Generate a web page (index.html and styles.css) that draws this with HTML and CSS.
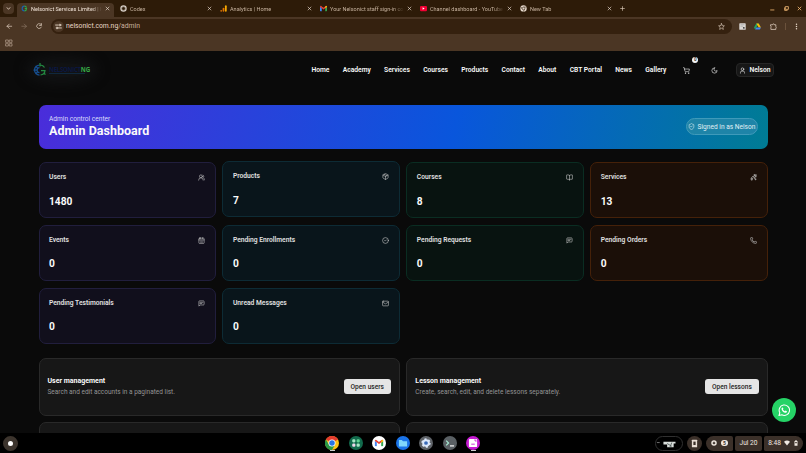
FILE: index.html
```html
<!DOCTYPE html>
<html lang="en">
<head>
  <meta charset="UTF-8" />
  <meta name="viewport" content="width=device-width, initial-scale=1.0"/>
  <title>Nelsonict Services Limited | ICT</title>
  <link rel="stylesheet" href="styles.css">
</head>
<body>

<!-- icon set -->
<svg class="sprite">
  <symbol id="users" viewBox="0 0 24 24"><path d="M16 21v-2a4 4 0 0 0-4-4H6a4 4 0 0 0-4 4v2M22 21v-2a4 4 0 0 0-3-3.87M16 3.13a4 4 0 0 1 0 7.75"/><circle cx="9" cy="7" r="4"/></symbol>
  <symbol id="users-round" viewBox="0 0 24 24"><path d="M18 21a8 8 0 0 0-16 0M22 20c0-3.37-2-6.5-4-8a5 5 0 0 0-.45-8.3"/><circle cx="10" cy="8" r="5"/></symbol>
  <symbol id="box" viewBox="0 0 24 24"><path d="M21 8a2 2 0 0 0-1-1.73l-7-4a2 2 0 0 0-2 0l-7 4A2 2 0 0 0 3 8v8a2 2 0 0 0 1 1.73l7 4a2 2 0 0 0 2 0l7-4A2 2 0 0 0 21 16zM3.3 7l8.7 5 8.7-5M12 22V12M7.5 4.3l9 5.1"/></symbol>
  <symbol id="book" viewBox="0 0 24 24"><path d="M12 7v14M3 18a1 1 0 0 1-1-1V4a1 1 0 0 1 1-1h5a4 4 0 0 1 4 4 4 4 0 0 1 4-4h5a1 1 0 0 1 1 1v13a1 1 0 0 1-1 1h-6a3 3 0 0 0-3 3 3 3 0 0 0-3-3z"/></symbol>
  <symbol id="sparkles" viewBox="0 0 24 24"><path d="M15 2l1.500 5.500L22 9l-5.500 1.500L15 16l-1.500-5.500L8 9l5.500-1.500zM6 13l1 3 3 1-3 1-1 4-1-4-3-1 3-1zM20 2v4M22 4h-4M19 16v4M21 18h-4"/></symbol>
  <symbol id="calendar" viewBox="0 0 24 24"><rect x="3" y="4" width="18" height="18" rx="2"/><path d="M8 2v4M16 2v4M3 10h18M8 14h.01M12 14h.01M16 14h.01M8 18h.01M12 18h.01M16 18h.01"/></symbol>
  <symbol id="check" viewBox="0 0 24 24"><circle cx="12" cy="12" r="10"/><path d="M9 12l2 2 4-4"/></symbol>
  <symbol id="message" viewBox="0 0 24 24"><path d="M21 15a2 2 0 0 1-2 2H7l-4 4V5a2 2 0 0 1 2-2h14a2 2 0 0 1 2 2zM13 12H7M17 8H7"/></symbol>
  <symbol id="phone" viewBox="0 0 24 24"><path d="M13.800 16.600a1 1 0 0 0 1.200-.3l.4-.5A2 2 0 0 1 17 15h3a2 2 0 0 1 2 2v3a2 2 0 0 1-2 2A18 18 0 0 1 2 4a2 2 0 0 1 2-2h3a2 2 0 0 1 2 2v3a2 2 0 0 1-.8 1.600l-.5.35a1 1 0 0 0-.3 1.230 14 14 0 0 0 6.400 6.400"/></symbol>
  <symbol id="mail" viewBox="0 0 24 24"><rect x="2" y="4" width="20" height="16" rx="2"/><path d="M22 7l-9 5.700a2 2 0 0 1-2 0L2 7"/></symbol>
  <symbol id="shield" viewBox="0 0 24 24"><path d="M20 13c0 5-3.500 7.500-7.700 9a1 1 0 0 1-.6 0C7.500 20.500 4 18 4 13V6a1 1 0 0 1 1-1c2 0 4.500-1.200 6.200-2.700a1.200 1.200 0 0 1 1.600 0C14.500 3.800 17 5 19 5a1 1 0 0 1 1 1zM9 12l2 2 4-4"/></symbol>
  <symbol id="cart" viewBox="0 0 24 24"><circle cx="8" cy="21" r="1"/><circle cx="19" cy="21" r="1"/><path d="M2 2h2l2.700 12.400a2 2 0 0 0 2 1.600h9.700a2 2 0 0 0 2-1.600L22 7H5.100"/></symbol>
  <symbol id="moon" viewBox="0 0 24 24"><path d="M12 3a6 6 0 0 0 9 9 9 9 0 1 1-9-9z"/></symbol>
  <symbol id="user" viewBox="0 0 24 24"><path d="M19 21v-2a5 5 0 0 0-5-5h-4a5 5 0 0 0-5 5v2"/><circle cx="12" cy="7.500" r="4.500"/></symbol>
  <symbol id="close" viewBox="0 0 24 24"><path d="M5 5l14 14M19 5L5 19"/></symbol>
  <symbol id="gmail" viewBox="0 0 24 18"><path fill="#4285f4" d="M0 3v13a2 2 0 0 0 2 2h4V7z"/><path fill="#34a853" d="M24 3v13a2 2 0 0 1-2 2h-4V7z"/><path fill="#ea4335" d="M0 3c0-3 3-4 5-2l7 5 7-5c2-2 5-1 5 2l-12 9z"/><path fill="#fbbc04" d="M18 2.500L19.500 1C22-1 24 1 24 3v1l-6 4.500z"/></symbol>
  <symbol id="chrome" viewBox="0 0 24 24"><circle cx="12" cy="12" r="12" fill="#fbc116"/><path fill="#e33b2e" d="M12 12L1.600 6A12 12 0 0 1 22.400 6z"/><path fill="#279847" d="M1.600 6A12 12 0 0 0 12 24l5.200-9H6.800z"/><circle cx="12" cy="12" r="6" fill="#fff"/><circle cx="12" cy="12" r="4.700" fill="#2874e6"/></symbol>
</svg>

<div class="tabs">
  <span class="tab-search"><svg class="line" viewBox="0 0 24 24"><path d="M5 8l7 8 7-8"/></svg></span>
  <div class="tab active">
    <svg class="favicon" viewBox="0 0 24 24"><path d="M12 4a8 8 0 1 0 0 16" fill="none" stroke="#1c5fae" stroke-width="4"/><path d="M12 4a8 8 0 0 1 7 5M12 20a8 8 0 0 0 7-8h-6" fill="none" stroke="#2fa84a" stroke-width="4"/></svg>
    <span>Nelsonict Services Limited | ICT</span>
    <svg class="line x"><use href="#close"/></svg>
  </div>
  <div class="tab">
    <svg class="favicon" viewBox="0 0 24 24"><circle cx="12" cy="12" r="9" fill="none" stroke="#d8d0c8" stroke-width="4"/><path d="M6 9l6-3 6 3v6l-6 3-6-3z" fill="none" stroke="#d8d0c8" stroke-width="1.500"/></svg>
    <span>Codex</span>
    <svg class="line x"><use href="#close"/></svg>
  </div>
  <div class="tab">
    <svg class="favicon" viewBox="0 0 24 24"><rect x="17" y="1" width="6" height="22" rx="3" fill="#f9ab00"/><rect x="9" y="9" width="6" height="14" rx="3" fill="#e37400"/><circle cx="4" cy="20" r="3" fill="#e37400"/></svg>
    <span>Analytics | Home</span>
    <svg class="line x"><use href="#close"/></svg>
  </div>
  <div class="tab">
    <svg class="favicon"><use href="#gmail"/></svg>
    <span>Your Nelsonict staff sign-in code</span>
    <svg class="line x"><use href="#close"/></svg>
  </div>
  <div class="tab">
    <svg class="favicon" viewBox="0 0 24 24"><rect y="3" width="24" height="18" rx="4" fill="#f00033"/><path d="M9 8l7 4-7 4z" fill="#fff"/></svg>
    <span>Channel dashboard - YouTube</span>
    <svg class="line x"><use href="#close"/></svg>
  </div>
  <div class="tab">
    <svg class="favicon" viewBox="0 0 24 24"><circle cx="12" cy="12" r="11" fill="#e5d8cb"/><path d="M12 7h10M8 14L3 6M16 14l-5 9" stroke="#2d1b08" stroke-width="2"/><circle cx="12" cy="12" r="4.500" fill="#e5d8cb" stroke="#2d1b08" stroke-width="2"/></svg>
    <span>New Tab</span>
    <svg class="line x"><use href="#close"/></svg>
  </div>
  <svg class="line plus" viewBox="0 0 24 24"><path d="M12 3v18M3 12h18"/></svg>
  <div class="window-buttons">
    <svg class="line" viewBox="0 0 24 24"><path d="M3 19h16"/></svg>
    <svg class="line" viewBox="0 0 24 24"><path d="M8 3h13v13H8zM3 9v12h12"/></svg>
    <svg class="line"><use href="#close"/></svg>
  </div>
</div>

<div class="toolbar">
  <svg class="line" viewBox="0 0 24 24"><path d="M21 12H4M12 4l-8 8 8 8"/></svg>
  <svg class="line dim" viewBox="0 0 24 24"><path d="M3 12h17M12 4l8 8-8 8"/></svg>
  <svg class="line" viewBox="0 0 24 24"><path d="M20 15a9 9 0 1 1-1-9M20 2v7h-7"/></svg>
  <div class="address">
    <span class="site"><svg class="line" viewBox="0 0 24 24"><path d="M2 7h9M13 17h9"/><circle cx="17" cy="7" r="3"/><circle cx="7" cy="17" r="3"/></svg></span>
    <span class="url">nelsonict.com.ng<i>/admin</i></span>
    <svg class="line" viewBox="0 0 24 24"><path d="M12 2l3 7 7 .6-5.300 4.800L18.300 22 12 18l-6.300 4 1.600-7.600L2 9.600 9 9z"/></svg>
  </div>
  <svg class="ext" viewBox="0 0 24 24"><rect x="1" y="1" width="22" height="22" rx="2" fill="#ded9d6"/><path d="M5 6h14M5 11h8" stroke="#999" stroke-width="2"/><path d="M13 13l8 3-5 5z" fill="#333"/></svg>
  <svg class="ext" viewBox="0 0 24 24"><path d="M8 2h8l-8 13-4 7-4-7z" fill="#1fa463"/><path d="M8 2h8l8 13h-8z" fill="#fbbc04"/><path d="M8 15h16l-4 7H4z" fill="#4285f4"/></svg>
  <svg class="line ext" viewBox="0 0 24 24"><path d="M3 6h6a3 3 0 0 1 6 0h5v6a3 3 0 0 1 0 5v5H3v-6a3 3 0 0 0 0-5z"/></svg>
  <span class="divider"></span>
  <svg class="ext dots" viewBox="0 0 24 24"><circle cx="12" cy="4" r="2.500"/><circle cx="12" cy="12" r="2.500"/><circle cx="12" cy="20" r="2.500"/></svg>
</div>
<div class="bookmarks">
  <svg class="line" viewBox="0 0 24 24"><path d="M3 3h7v7H3zM14 3h7v7h-7zM3 14h7v7H3zM14 14h7v7h-7z"/></svg>
</div>

<div class="page">
  <header>
    <div class="logo">
      <svg viewBox="0 0 28 28"><g fill="none" stroke-width="2.500"><path d="M13 4a10 10 0 0 0 0 20M13 9a5 5 0 0 0 0 10M1 14h7M5 6l4 4M5 22l4-4" stroke="#164f91"/><path d="M15 4a10 10 0 0 1 8 5M15 24a10 10 0 0 0 9-9h-8M14 0v7M21 20l4 3" stroke="#238b42"/></g></svg>
      <div><b>NELSONICT<em>NG</em></b><small></small></div>
    </div>
    <nav>
      <a>Home</a><a>Academy</a><a>Services</a><a>Courses</a><a>Products</a><a>Contact</a><a>About</a><a>CBT Portal</a><a>News</a><a>Gallery</a>
    </nav>
    <div class="cart"><svg class="line"><use href="#cart"/></svg><span>0</span></div>
    <svg class="line moon"><use href="#moon"/></svg>
    <div class="account"><svg class="line"><use href="#user"/></svg>Nelson</div>
  </header>

  <main>
    <section class="hero">
      <div>
        <p>Admin control center</p>
        <h1>Admin Dashboard</h1>
      </div>
      <div class="signed"><svg class="line"><use href="#shield"/></svg>Signed in as Nelson</div>
    </section>

    <section class="stats">
      <div class="card indigo"><h2>Users</h2><svg class="line"><use href="#users-round"/></svg><strong>1480</strong></div>
      <div class="card cyan lifted"><h2>Products</h2><svg class="line"><use href="#box"/></svg><strong>7</strong></div>
      <div class="card green"><h2>Courses</h2><svg class="line"><use href="#book"/></svg><strong>8</strong></div>
      <div class="card orange"><h2>Services</h2><svg class="line"><use href="#sparkles"/></svg><strong>13</strong></div>
      <div class="card indigo"><h2>Events</h2><svg class="line"><use href="#calendar"/></svg><strong>0</strong></div>
      <div class="card cyan"><h2>Pending Enrollments</h2><svg class="line"><use href="#check"/></svg><strong>0</strong></div>
      <div class="card green"><h2>Pending Requests</h2><svg class="line"><use href="#message"/></svg><strong>0</strong></div>
      <div class="card orange"><h2>Pending Orders</h2><svg class="line"><use href="#phone"/></svg><strong>0</strong></div>
      <div class="card indigo"><h2>Pending Testimonials</h2><svg class="line"><use href="#message"/></svg><strong>0</strong></div>
      <div class="card cyan"><h2>Unread Messages</h2><svg class="line"><use href="#mail"/></svg><strong>0</strong></div>
    </section>

    <section class="panels">
      <div class="panel">
        <div><h3>User management</h3><p>Search and edit accounts in a paginated list.</p></div>
        <button>Open users</button>
      </div>
      <div class="panel">
        <div><h3>Lesson management</h3><p>Create, search, edit, and delete lessons separately.</p></div>
        <button>Open lessons</button>
      </div>
      <div class="panel"></div>
      <div class="panel"></div>
    </section>
  </main>

  <a class="whatsapp"><svg viewBox="0 0 24 24"><path d="M2 22l1.500-5.200A10 10 0 1 1 7.300 20.600z" fill="none" stroke="#fff" stroke-width="2"/><path d="M8.500 6.500c.5 0 .8 0 1 .6l.8 1.900c.1.400-.1.700-.8 1.500.8 1.600 2 2.700 3.800 3.500l1.200-1.300 2.600 1.300c.2 2-1.300 3-2.800 3C10.500 16.800 7 12.500 6.700 9.500c0-1.600.8-3 1.800-3z" fill="#fff"/></svg></a>
</div>

<div class="shelf">
  <span class="launcher"></span>
  <div class="apps">
    <span class="app open"><svg viewBox="0 0 24 24"><use href="#chrome"/></svg></span>
    <span class="app"><svg viewBox="0 0 24 24"><circle cx="12" cy="12" r="12" fill="#126a4c"/><g fill="#a6e8c4"><rect x="5.500" y="5.500" width="5.500" height="5.500" rx="2"/><rect x="13" y="5.500" width="5.500" height="5.500" rx="2" fill="#5ed391"/><rect x="5.500" y="13" width="5.500" height="5.500" rx="2" fill="#f1d6ec"/><rect x="13" y="13" width="5.500" height="5.500" rx="2"/></g></svg></span>
    <span class="app"><svg viewBox="0 0 24 24"><circle cx="12" cy="12" r="12" fill="#fff"/><use href="#gmail" x="4.500" y="6" width="15" height="12"/></svg></span>
    <span class="app"><svg viewBox="0 0 24 24"><circle cx="12" cy="12" r="12" fill="#1a73e8"/><path d="M5 7h5l2 2h7v9H5z" fill="#81d8fb"/></svg></span>
    <span class="app"><svg viewBox="0 0 24 24"><circle cx="12" cy="12" r="12" fill="#5f6368"/><circle cx="12" cy="12" r="6.500" fill="#dce8fb" stroke="#dce8fb" stroke-width="3" stroke-dasharray="3.400 3.400"/><circle cx="12" cy="12" r="3.200" fill="#3869b8"/></svg></span>
    <span class="app"><svg viewBox="0 0 24 24"><circle cx="12" cy="12" r="12" fill="#5a6064"/><path d="M5.500 8l4 4-4 4" fill="none" stroke="#a8ebd3" stroke-width="2"/><path d="M12 17h7" stroke="#fff" stroke-width="2"/></svg></span>
    <span class="app open"><svg viewBox="0 0 24 24"><circle cx="12" cy="12" r="12" fill="#c51bd2"/><rect x="5" y="5" width="14" height="14" rx="1.500" fill="#fff"/><path d="M14 7h3v3M9 14h6" fill="none" stroke="#c51bd2" stroke-width="1.500"/></svg></span>
  </div>
  <div class="tray">
    <span class="preview"><svg viewBox="0 0 28 14"><path d="M1 6h3" stroke="#777"/><path d="M8 5h13v2h-2v4H12V8H8z" fill="#d9dedb"/><path d="M12 7l5 3M17 6l-2 5" stroke="#56605e"/></svg></span>
    <span class="phone"><svg viewBox="0 0 24 24"><rect x="5" y="2" width="14" height="20" rx="1" fill="#e9ded4"/><rect x="9" y="7" width="6" height="9" fill="#3b3029"/></svg></span>
    <span class="pill first"><svg viewBox="0 0 24 24"><circle cx="12" cy="12" r="11" fill="#f1e9e1"/><path d="M12 7v10M7 12h10" stroke="#3b3029" stroke-width="5"/></svg><b>5</b></span>
    <span class="pill date">Jul 20</span>
    <span class="pill last">8:48
      <svg viewBox="0 0 24 24"><path d="M0 7a18 18 0 0 1 24 0L12 22z" fill="#f1e9e1"/></svg>
      <svg viewBox="0 0 24 24"><path d="M9 1h6v3h3v19H6V4h3z" fill="#f1e9e1"/><path d="M9 8h6v5H9z" fill="#3b3029"/></svg>
    </span>
  </div>
</div>

</body>
</html>
```
FILE: styles.css
```css
* {
  box-sizing: border-box;
}

body {
  margin: 0;
  width: 806px;
  height: 453px;
  overflow: hidden;
  background: #000;
  color: #fafafa;
  font-family: Roboto, "Liberation Sans", sans-serif;
  font-size: 6.6px;
  display: flex;
  flex-direction: column;
}

h1, h2, h3, p {
  margin: 0;
}

svg {
  display: block;
  flex: none;
  width: 7px;
  height: 7px;
}

.sprite {
  display: none;
}

.line {
  fill: none;
  stroke: currentColor;
  stroke-width: 2;
  stroke-linecap: round;
  stroke-linejoin: round;
}

/* browser */
.tabs {
  flex: none;
  height: 17px;
  background: #2d1b08;
  color: #e5d3c0;
  display: flex;
  align-items: center;
  padding-left: 3px;
  font-size: 5.5px;
}

.tab-search {
  width: 11px;
  height: 11px;
  border-radius: 4px;
  background: #4b3624;
  display: grid;
  place-items: center;
  margin-right: 3px;
}

.tab-search svg {
  width: 5px;
  height: 5px;
  stroke-width: 4;
}

.tab {
  width: 100px;
  height: 14px;
  margin-top: 3px;
  padding: 0 4.500px 3px 4px;
  display: flex;
  align-items: center;
  gap: 3px;
  color: #c7b39f;
}

.tab.active {
  width: 97px;
  margin-right: 2px;
  background: #4b3624;
  border-radius: 4px 4px 0 0;
  color: #f1e4d8;
}

.tab span {
  flex: 1;
  white-space: nowrap;
  overflow: hidden;
  -webkit-mask-image: linear-gradient(90deg, #000 85%, transparent);
  mask-image: linear-gradient(90deg, #000 85%, transparent);
}

.tab .x {
  width: 5px;
  height: 5px;
  stroke-width: 3;
  color: #f1e4d8;
}

.plus {
  width: 5px;
  height: 5px;
  margin-left: 4px;
  stroke-width: 3;
}

.window-buttons {
  display: flex;
  gap: 8.500px;
  margin-left: auto;
  padding-right: 4px;
  color: #efb772;
}

.window-buttons svg {
  width: 5px;
  height: 5px;
  stroke-width: 4;
}

.toolbar {
  flex: none;
  height: 18px;
  background: #4b3624;
  color: #eadaca;
  display: flex;
  align-items: center;
  padding: 0 6px;
}

.toolbar > .line {
  width: 6.500px;
  height: 6.500px;
  margin-right: 8.700px;
  stroke-width: 2.500;
}

.toolbar .dim {
  color: #8b7765;
}

.address {
  width: 682px;
  height: 15px;
  border-radius: 8px;
  background: #35210f;
  display: flex;
  align-items: center;
  padding: 0 7px 0 2px;
  margin: 0 7px 0 -1px;
}

.site {
  width: 11px;
  height: 11px;
  border-radius: 50%;
  background: #4b3624;
  display: grid;
  place-items: center;
}

.site svg {
  stroke-width: 3;
}

.url {
  flex: 1;
  font-size: 6.800px;
  padding-left: 2.500px;
}

.url i {
  font-style: normal;
  color: #c9b39e;
}

.toolbar .ext {
  width: 7px;
  height: 7px;
  margin-right: 8.300px;
}

.divider {
  width: 1px;
  height: 7px;
  background: #6b523c;
  margin-right: 7px;
}

.toolbar .dots {
  fill: #eadaca;
  margin: 0;
}

.bookmarks {
  flex: none;
  height: 16px;
  background: #4b3624;
  color: #b9a592;
  padding: 3.500px 4.500px;
}

.bookmarks svg {
  width: 8px;
  height: 8px;
}

/* site */
.page {
  position: relative;
  flex: none;
  height: 382px;
  overflow: hidden;
  background: #0a0a0a;
}

header {
  height: 38px;
  display: flex;
  align-items: center;
  padding: 0 32px 0 33px;
  font-weight: 600;
  font-size: 6.700px;
}

.logo {
  width: 58px;
  display: flex;
  align-items: center;
  gap: 2px;
  border-radius: 50%;
  background: #111213;
  box-shadow: 0 0 12px 7px #111213;
}

.logo svg {
  width: 14px;
  height: 14px;
}

.logo b {
  display: block;
  font: 700 6.200px/7px "Open Sans", sans-serif;
  letter-spacing: -0.350px;
  color: #0b1740;
}

.logo em {
  font-style: normal;
  letter-spacing: 0;
  color: #35a844;
}

.logo small {
  display: block;
  width: 36px;
  height: 1px;
  background: #10283d;
}

nav {
  display: flex;
  gap: 13.300px;
  margin-left: auto;
}

.cart {
  position: relative;
  margin-left: 17px;
}

.cart span {
  position: absolute;
  left: 9px;
  top: -10px;
  width: 6px;
  height: 6px;
  border-radius: 50%;
  background: #f5f5f5;
  color: #222;
  font-size: 4.500px;
  line-height: 6px;
  text-align: center;
}

.moon {
  margin: 0 17.700px 0 21px;
}

.account {
  width: 38px;
  height: 14px;
  border: 1px solid #262626;
  border-radius: 4px;
  background: #171717;
  display: flex;
  align-items: center;
  justify-content: center;
  gap: 3px;
}

main {
  padding: 15.500px 38.500px 0;
}

.hero {
  height: 44px;
  border-radius: 7px;
  background: linear-gradient(90deg, #4b2edb, #155dfc00 100%), linear-gradient(90deg, #4b2edb, #0054dc 58%, #007a96);
  background: linear-gradient(100deg, #4a2dda, #0956dc 57%, #007c94);
  display: flex;
  align-items: center;
  justify-content: space-between;
  padding: 0 10px 0 10.500px;
}

.hero p {
  font-size: 6.600px;
  line-height: 8px;
  color: #dcdcfb;
}

.hero h1 {
  font-size: 12.500px;
  line-height: 15px;
}

.signed {
  width: 72px;
  height: 17px;
  border: 1px solid #3f9aba;
  border-radius: 9px;
  background: #1e84a8;
  color: #e1f1f5;
  display: flex;
  align-items: center;
  justify-content: center;
  gap: 3px;
  font-size: 6.600px;
  white-space: nowrap;
}

.stats {
  display: grid;
  grid-template-columns: repeat(4, 1fr);
  grid-auto-rows: 56.300px;
  gap: 6.700px;
  margin-top: 13.500px;
}

.card {
  border: 1px solid;
  border-radius: 7px;
  padding: 10px 9.500px;
  display: grid;
  grid-template-columns: 1fr auto;
  align-content: start;
}

.card h2 {
  font-size: 6.700px;
  font-weight: 600;
  line-height: 9px;
  color: #e0e0e0;
}

.card svg {
  margin-top: 1px;
  color: #c9c9c9;
}

.card strong {
  font-size: 10.200px;
  line-height: 12px;
  margin-top: 13.500px;
}

.indigo {
  background: #110f1c;
  border-color: #211e3d;
}

.cyan {
  background: #09151b;
  border-color: #0d2b35;
}

.green {
  background: #081310;
  border-color: #0a2d22;
}

.orange {
  background: #1b0f08;
  border-color: #452109;
}

.lifted {
  transform: translateY(-1px);
}

.panels {
  display: grid;
  grid-template-columns: 1fr 1fr;
  grid-auto-rows: 58px;
  gap: 6.500px 6.700px;
  margin-top: 13.500px;
}

.panel {
  border: 1px solid #292929;
  border-radius: 7px;
  background: #171717;
  display: flex;
  align-items: center;
  justify-content: space-between;
  padding: 0 8px;
}

.panel h3 {
  font-size: 7px;
  line-height: 10px;
}

.panel p {
  font-size: 6.500px;
  line-height: 10px;
  margin-top: 1px;
  color: #949494;
}

.panel button {
  height: 15px;
  border: 0;
  border-radius: 3px;
  background: #e5e5e5;
  color: #262626;
  font: 500 6.600px Roboto, sans-serif;
  padding: 0 6.700px;
}

.whatsapp {
  position: absolute;
  right: 10px;
  bottom: 11px;
  width: 24px;
  height: 24px;
  border-radius: 50%;
  background: #25d366;
  display: grid;
  place-items: center;
}

.whatsapp svg {
  width: 12.500px;
  height: 12.500px;
}

/* shelf */
.shelf {
  height: 20px;
  display: flex;
  align-items: center;
  padding: 0 3px;
}

.launcher {
  width: 15px;
  height: 15px;
  border: 5px solid #3c342d;
  border-radius: 50%;
  background: #fff;
}

.apps {
  display: flex;
  gap: 9.500px;
  margin-left: 307px;
}

.app {
  height: 18px;
  padding-top: 2px;
  border-bottom: 1px solid transparent;
}

.app svg {
  width: 14px;
  height: 14px;
}

.app.open {
  background: linear-gradient(#ccc, #ccc) center bottom / 5px 1px no-repeat;
}

.tray {
  display: flex;
  align-items: center;
  margin-left: auto;
}

.preview {
  border: 1px solid #303030;
  border-radius: 8px;
  margin-right: 4px;
}

.preview svg {
  width: 26px;
  height: 13px;
}

.phone {
  width: 15px;
  height: 15px;
  border-radius: 50%;
  background: #3b3029;
  display: grid;
  place-items: center;
  margin-right: 4px;
}

.phone svg {
  width: 9px;
  height: 9px;
}

.pill {
  height: 15px;
  background: #3b3029;
  display: flex;
  align-items: center;
  justify-content: center;
  gap: 4px;
  margin-left: 2px;
  color: #f1e9e1;
}

.pill.first {
  width: 27px;
  margin-left: 0;
  border-radius: 8px 2px 2px 8px;
}

.pill b {
  width: 6.500px;
  height: 6.500px;
  border-radius: 50%;
  background: #f1e9e1;
  color: #3b3029;
  font-size: 5px;
  line-height: 6.500px;
  text-align: center;
}

.pill svg {
  width: 6px;
  height: 6px;
}

.pill.date {
  width: 27px;
  border-radius: 2px;
}

.pill.last {
  width: 39px;
  gap: 3px;
  border-radius: 2px 8px 8px 2px;
}
```
